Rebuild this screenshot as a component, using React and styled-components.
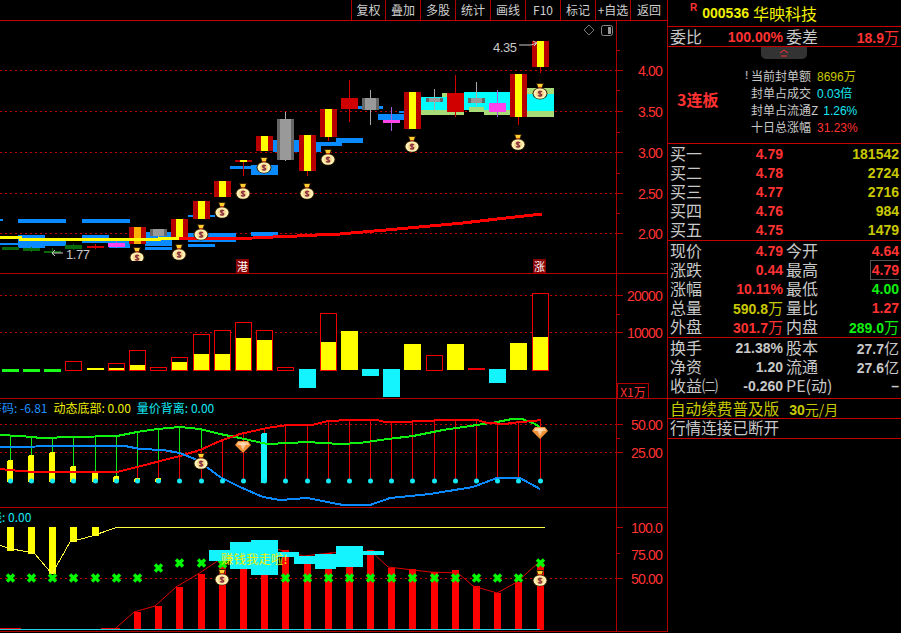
import styled, { createGlobalStyle } from "styled-components"

const GlobalStyle = createGlobalStyle`
  html, body { margin: 0; padding: 0; background: #000; }
  * { box-sizing: border-box; }
`

const CJK = `"Noto Sans CJK SC", sans-serif`
const DIGITS = `"Liberation Sans", "Noto Sans CJK SC", sans-serif`
const AXIS = `"Liberation Sans", "Noto Sans CJK SC", sans-serif`
const LINE = "#b00000"
const RED = "#ff3232"
const YELLOW = "#c8c800"
const GREEN = "#12e812"

// left edge of every day's bar, shared by the four panes
const LEFT = [2, 23, 44, 65, 87, 108, 129, 150, 171, 193, 214, 235, 256, 277, 299, 320, 341, 362, 383, 404, 426, 447, 468, 489, 510, 532]
const MID = LEFT.map((x) => x + 8.5)

const BLUE_BLOCKS = [
  [0, 219, 3, 2], [18, 219, 48, 4], [82, 219, 48, 4], [0, 243, 18, 2], [18, 235, 27, 13], [45, 240, 21, 6],
  [82, 235, 27, 8], [109, 240, 21, 8], [145, 232, 27, 14], [145, 247, 27, 3], [188, 215, 27, 2], [188, 233, 48, 9],
  [188, 244, 27, 3], [251, 232, 27, 4], [230, 166, 27, 3], [251, 165, 27, 10], [273, 140, 5, 12], [294, 140, 5, 12],
  [316, 142, 5, 10], [321, 142, 21, 4], [336, 138, 27, 5], [358, 106, 4, 3], [379, 106, 4, 3], [378, 114, 27, 6], [399, 111, 5, 2],
]

const LIME_BLOCKS = [[442, 93, 5, 4], [421, 110, 43, 5], [469, 107, 15, 5], [484, 110, 26, 5], [527, 88, 27, 6], [527, 111, 27, 6]]
const CYAN_BLOCKS = [[421, 97, 26, 13], [464, 92, 46, 15], [464, 107, 5, 3], [484, 107, 26, 3], [527, 94, 27, 17]]

// [index, kind, top, bottom, wickTop, wickBottom]
const CANDLES = [
  [0, "dark", 247, 250], [1, "dark", 248, 251, 247, 252], [2, "dark", 251, 253, 248, 255], [3, "dark", 245, 249, 244, 250],
  [4, "flat", 246, 248, 244, 249], [5, "pink", 243, 247, 241, 248], [6, "orange", 227, 244], [7, "grey", 229, 236, 229, 238],
  [8, "up", 219, 238], [9, "up", 201, 219], [10, "up", 181, 197], [11, "up", 160, 162, 160, 176], [12, "up", 136, 151],
  [13, "grey", 119, 160, 112, 161], [14, "up", 135, 171, 135, 176], [15, "up", 109, 137, 109, 141], [16, "flat", 98, 109, 80, 122],
  [17, "grey", 98, 110, 90, 125], [18, "pink", 120, 123, 107, 131], [19, "up", 92, 129], [20, "grey", 98, 102, 89, 111],
  [21, "flat", 93, 112, 75, 117], [22, "grey", 98, 103, 82, 106], [23, "pink", 103, 112, 90, 117], [24, "up", 74, 117, 74, 125],
  [25, "up", 41, 67, 41, 73],
]

const MAIN_BAGS = [[137, 255], [179, 252], [201, 232], [222, 210], [243, 191], [264, 165], [307, 191], [328, 157], [412, 144], [518, 142], [540, 91]]

const MA_RED = "179,239 253,238 273,237 297,236 317,235 340,234 363,232 397,229 430,226 463,223 497,219 542,214"

// [index, top, fillTop] hollow bar with yellow part, [index, top] solid ones below
const HOLLOW = [[3, 361], [5, 363, 368], [6, 350, 365], [7, 367], [8, 357, 362], [9, 334, 354], [10, 330, 354], [11, 322, 338], [12, 330, 340], [13, 367], [15, 313, 342], [20, 355], [25, 293, 337]]
const SOLID = [[4, 368], [16, 331], [19, 344], [21, 344], [24, 343]]
const CYAN_VOL = [[14, 388], [17, 376], [18, 397], [23, 383]]

const IND_GREEN = "0,435 20,436 42,438 73,437 117,436 137,432 157,429 180,427 200,429 220,434 240,438 267,444 290,443 307,442 340,444 360,443 380,440 413,436 443,430 477,425 497,422 512,419 522,419 533,423 540,427"
const IND_RED = "0,469 20,471 35,472 117,472 137,467 180,456 200,450 220,441 240,434 267,428 287,425 312,425 328,421 350,420 377,420 385,422 412,422 413,421 433,421 435,420 477,420 487,423 507,424 510,423 533,421 541,420"
const IND_BLUE = "0,447 73,446 125,446 140,449 163,450 180,453 197,460 220,477 240,487 263,497 280,500 307,498 343,505 370,505 390,498 430,494 473,487 497,478 520,478 540,489"
const RED_AT = [469, 471, 472, 472, 472, 472, 467, 462, 456, 450, 441, 434, 428, 425, 425, 421, 420, 420, 422, 421, 420, 420, 420, 424, 422, 420]
const GREEN_AT = [435, 436, 438, 437, 436, 436, 432, 429, 427, 429]
const IND_YELLOW = [460, 455, 452, 466, 472, 476, 478, 478]

const TOP_BARS = [[7, 551], [28, 554], [49, 574], [70, 542], [92, 536]]
const TOP_LINE = "0,545 7,548 28,552 35,554 52,574 70,542 92,536 115,528 545,527"
const RED_BARS = [[6, 612], [7, 606], [8, 587], [9, 574], [10, 560], [11, 545], [12, 545], [13, 550], [14, 556], [15, 553], [16, 550], [17, 550], [18, 568], [19, 569], [20, 572], [21, 570], [22, 586], [23, 593], [24, 582], [25, 563]]
const RED_TRACE = "116,628 134,612 155,606 176,587 198,574 219,560 233,547 250,542 280,550 304,556 330,553 346,552 373,553 388,567 430,572 458,573 473,586 497,593 517,582 538,563"
const LOW_CROSS = [0, 1, 2, 3, 4, 5, 6, 13, 14, 15, 16, 17, 18, 19, 20, 21, 22, 23, 24]
const HIGH_CROSS = [[7, 568], [8, 563], [9, 563], [10, 564], [25, 563]]
const CLOUD = [[209, 550, 21, 11], [230, 542, 21, 27], [251, 540, 27, 35], [278, 552, 21, 5], [294, 556, 21, 8], [315, 554, 21, 15], [336, 546, 27, 21], [363, 551, 21, 4]]

const TOOLS = ["复权", "叠加", "多股", "统计", "画线", "F10", "标记", "+自选", "返回"]

const Screen = styled.div`
  display: flex;
  width: 901px;
  height: 633px;
  overflow: hidden;
  background: #000;
`
const ChartColumn = styled.div`
  display: flex;
  flex-direction: column;
  width: 668px;
  flex: none;
`
const Toolbar = styled.div`
  display: flex;
  height: 21px;
  padding-left: 351px;
  border-bottom: 1px solid #c80000;
`
const ToolButton = styled.div`
  width: 35px;
  border-left: 1px solid ${LINE};
  color: #cfcfcf;
  font: 12px/19px ${CJK};
  text-align: center;
  white-space: nowrap;
  &:first-child { width: 34px; }
  &:last-child { flex: 1; border-right: 1px solid ${LINE}; }
`
const Pane = styled.div`
  position: relative;
  display: flex;
  height: ${(p) => p.$height}px;
  border-bottom: 1px solid ${LINE};
`
const Plot = styled.svg`
  display: block;
  width: 616px;
  height: 100%;
  flex: none;
  shape-rendering: crispEdges;
`
const Axis = styled.svg`
  display: block;
  width: 52px;
  height: 100%;
  flex: none;
  border-left: 1px solid ${LINE};
  border-right: 1px solid ${LINE};
  shape-rendering: crispEdges;
`
const AxisLabel = styled.text`
  fill: ${RED};
  font: 14px ${AXIS};
  letter-spacing: -0.8px;
  text-anchor: end;
  dominant-baseline: central;
`
const ChartNote = styled.text`
  fill: #c8c8c8;
  font: 13px ${AXIS};
  letter-spacing: -0.4px;
  dominant-baseline: central;
`
const BoardMark = styled.div`
  position: absolute;
  top: ${(p) => p.$top}px;
  left: ${(p) => p.$left}px;
  width: 13px;
  height: 14px;
  background: #860000;
  color: #fff;
  font: 11px/14px ${CJK};
  text-align: center;
`
const Legend = styled.div`
  position: absolute;
  top: 1px;
  left: ${(p) => p.$left}px;
  display: flex;
  gap: 6px;
  font: 12px/16px ${CJK};
  white-space: nowrap;
`
const LegendItem = styled.span`
  color: ${(p) => p.$color};
`
const UnitBox = styled.div`
  position: absolute;
  left: 617px;
  bottom: 0;
  width: 32px;
  height: 15px;
  border: 1px solid ${LINE};
  border-bottom: 0;
  color: ${RED};
  font: 12px/15px ${CJK};
  text-align: center;
`
const SellSignal = styled.div`
  position: absolute;
  top: 42px;
  left: 221px;
  color: #f0f000;
  font: 12.5px/18px ${CJK};
  white-space: nowrap;
`

const QuotePanel = styled.div`
  display: flex;
  flex-direction: column;
  width: 233px;
  flex: none;
`
const Section = styled.div`
  border-bottom: 1px solid #c80000;
  height: ${(p) => p.$height}px;
`
const TitleRow = styled(Section)`
  display: flex;
  align-items: center;
  padding-left: 22px;
  color: #f0f000;
`
const Rights = styled.span`
  align-self: flex-start;
  margin: 3px 5px 0 0;
  color: ${RED};
  font: bold 10px/10px ${AXIS};
`
const Code = styled.span`
  font: bold 14px ${DIGITS};
  margin-right: 4px;
`
const Name = styled.span`
  font: 16px ${CJK};
`
const QuoteGrid = styled.div`
  display: grid;
  grid-template-columns: 113px 113px;
  column-gap: 3px;
  padding-left: 2px;
`
const Cell = styled.div`
  display: flex;
  justify-content: ${(p) => (p.$end ? "flex-end" : "space-between")};
  align-items: center;
  height: ${(p) => p.$row}px;
  white-space: nowrap;
`
const Label = styled.span`
  margin-top: -2px;
  color: #c8c8c8;
  font: 16px/1 ${CJK};
`
const Value = styled.span`
  color: ${(p) => p.$color || RED};
  font: bold 14px/1 ${DIGITS};
`
const Unit = styled.span`
  font: 15px/1 ${CJK};
`
const BoxedValue = styled(Value)`
  padding: 2px 0 2px 1px;
  border: 1px solid #555;
  border-right: 0;
`
const BuyRows = styled.div`
  display: grid;
  grid-template-columns: 113px 116px;
  padding-left: 2px;
`
const Board = styled(Section)`
  position: relative;
  display: flex;
  align-items: center;
`
const Collapse = styled.svg`
  position: absolute;
  top: 0;
  left: 93px;
  width: 46px;
  height: 12px;
  background: #333;
  border-radius: 0 0 5px 5px;
`
const BoardTag = styled.div`
  width: 83px;
  margin-top: 8px;
  padding-left: 9px;
  color: ${RED};
  font: bold 16px ${CJK};
`
const BoardList = styled.div`
  display: flex;
  flex-direction: column;
  margin-top: 12px;
  position: relative;
`
const BoardLine = styled.div`
  height: 17px;
  color: #c8c8c8;
  font: 12px/17px ${CJK};
  white-space: nowrap;
`
const BoardValue = styled.span`
  margin-left: ${(p) => p.$gap || 6}px;
  color: ${(p) => p.$color};
  font-family: ${AXIS};
`
const Alert = styled.span`
  position: absolute;
  left: -6px;
  top: 0;
  color: #aaa;
  font: bold 10px/17px ${AXIS};
`
const Notice = styled(Section)`
  padding-left: 2px;
  color: ${(p) => p.$color};
  font: 15.6px/${(p) => p.$height - 3}px ${CJK};
  white-space: nowrap;
`
const Price = styled.span`
  margin-left: 10px;
  font: bold 14px ${DIGITS};
`
const PriceUnit = styled.span`
  font: 14px ${CJK};
`

function MoneyBag({ x, y }) {
  return (
    <g transform={`translate(${x - 8} ${y - 9})`} shapeRendering="auto">
      <path d="M4 1h8l-1.5 4.5H5.500z" fill="#3a2400" />
      <ellipse cx="8" cy="11.500" rx="7.500" ry="6" fill="#3a2400" />
      <ellipse cx="8" cy="11.500" rx="6.500" ry="5.200" fill="#fff2b8" />
      <path d="M5.200 2h5.600l-1 3H6.200z" fill="#ffd030" />
      <rect x="6.200" y="5" width="3.600" height="1.200" fill="#c04010" />
      <circle cx="8" cy="11.500" r="3.800" fill="#f6d488" />
      <path d="M10 9.800c-1-.7-3.600-.7-3.600.8s3.400 1 3.400 2.400-2.600 1.400-3.800.6M8 8.500v6" fill="none" stroke="#8a3040" strokeWidth="1.200" />
    </g>
  )
}

function Gem({ x, y }) {
  return (
    <g transform={`translate(${x - 8} ${y - 6})`} shapeRendering="auto">
      <path d="M3 0h10l3 4-8 8-8-8z" fill="#f09038" />
      <path d="M3 1h10l1 3H2z" fill="#ffc890" />
      <path d="M5 3c2-2 4-2 6 0l-3 6z" fill="#ffe4c8" opacity="0.7" />
    </g>
  )
}

function Cross({ x, y }) {
  return <path d={`M${x - 3.5} ${y - 3.5}L${x + 3.5} ${y + 3.5}M${x + 3.5} ${y - 3.5}L${x - 3.5} ${y + 3.5}`} stroke="#00f800" strokeWidth="3.500" shapeRendering="auto" />
}

function Dotted({ y, width = 616 }) {
  return <line x1="0" x2={width} y1={y} y2={y} stroke="#c00000" strokeDasharray="2 3" />
}

function Block({ rect, fill }) {
  return <rect x={rect[0]} y={rect[1]} width={rect[2]} height={rect[3]} fill={fill} />
}

function Candle({ data }) {
  const [i, kind, top, bottom, wickTop, wickBottom] = data
  const x = LEFT[i]
  const wickColor = { grey: "#aaa", pink: "#a060e0", dark: "#0a6a0a" }[kind] || "#d00000"
  return (
    <g>
      {wickTop !== undefined && <rect x={MID[i] - 0.5} y={wickTop} width="1" height={wickBottom - wickTop} fill={wickColor} />}
      {kind === "dark" && <rect x={x} y={top} width="17" height={bottom - top} fill="#0a6a0a" />}
      {kind === "flat" && <rect x={x} y={top} width="17" height={bottom - top} fill="#d00000" />}
      {kind === "pink" && <rect x={x} y={top} width="17" height={bottom - top} fill="#ff44ee" />}
      {(kind === "up" || kind === "orange") && (
        <>
          <rect x={x} y={top} width="17" height={bottom - top} fill="#b80000" />
          <rect x={x + 5} y={top} width="7" height={bottom - top} fill={kind === "up" ? "#ffff00" : "#ffb000"} />
        </>
      )}
      {kind === "grey" && (
        <>
          <rect x={x} y={top} width="17" height={bottom - top} fill="#666" />
          <rect x={x + 3} y={top} width="11" height={bottom - top} fill="#999" />
        </>
      )}
    </g>
  )
}

function MainPane() {
  return (
    <Pane $height={253}>
      <Plot viewBox="0 21 616 252">
        {[70, 111, 152, 193, 233].map((y) => <Dotted key={y} y={y} />)}
        {BLUE_BLOCKS.map((r, i) => <Block key={i} rect={r} fill="#0a8aff" />)}
        {LIME_BLOCKS.map((r, i) => <Block key={i} rect={r} fill="#a8dc78" />)}
        {CYAN_BLOCKS.map((r, i) => <Block key={i} rect={r} fill="#00ffff" />)}
        {CANDLES.map((c) => <Candle key={c[0]} data={c} />)}
        <polyline points="0,237 20,237 20,239 159,239 159,238 179,238" fill="none" stroke="#ffff00" strokeWidth="3" />
        <polyline points={MA_RED} fill="none" stroke="#ff0000" strokeWidth="3" />
        {MAIN_BAGS.map(([x, y]) => <MoneyBag key={x} x={x} y={y} />)}
        {/* the lowest bag is cut off in the terminal too */}
        <rect x="128" y="261" width="18" height="5" fill="#000" />
        <ChartNote x="493" y="47">4.35</ChartNote>
        <path d="M519 45h12l6-2" stroke="#c8c8c8" fill="none" shapeRendering="auto" />
        <path d="M533 41l4 2-3 3" stroke="#c8c8c8" fill="none" shapeRendering="auto" />
        <ChartNote x="66" y="254" letterSpacing="1">1.77</ChartNote>
        <path d="M53 253h10M55 250l-3 3 3 3" stroke="#c8c8c8" fill="none" shapeRendering="auto" />
        <path d="M589 25l5 5-5 5-5-5z" stroke="#777" fill="none" shapeRendering="auto" />
        <rect x="601.500" y="25.500" width="11" height="10" rx="2" stroke="#888" fill="none" shapeRendering="auto" />
        <rect x="608" y="27" width="3" height="7" fill="#999" />
      </Plot>
      <Axis viewBox="617 21 50 252">
        {[70, 111, 152, 193, 233].map((y, i) => (
          <g key={y}>
            <rect x="617" y={y} width="6" height="1" fill={LINE} />
            <AxisLabel x="662" y={y + 1}>{(4 - i * 0.5).toFixed(2)}</AxisLabel>
          </g>
        ))}
        {[50, 90, 132, 173, 213].map((y) => <rect key={y} x="617" y={y} width="3" height="1" fill={LINE} />)}
      </Axis>
      <BoardMark $top={238} $left={236}>港</BoardMark>
      <BoardMark $top={238} $left={533}>涨</BoardMark>
    </Pane>
  )
}

function VolumePane() {
  return (
    <Pane $height={125}>
      <Plot viewBox="0 274 616 124">
        <Dotted y={295} />
        <Dotted y={332} />
        {[0, 1, 2].map((i) => <rect key={i} x={LEFT[i]} y="369" width="17" height="3" fill="#1aff1a" />)}
        {HOLLOW.map(([i, top, fill]) => (
          <g key={i}>
            <rect x={LEFT[i]} y={top} width="17" height={370 - top} fill="#000" />
            {fill && <rect x={LEFT[i]} y={fill} width="17" height={370 - fill} fill="#ffff00" />}
            <rect x={LEFT[i] + 0.5} y={top + 0.5} width="16" height={369.5 - top} fill="none" stroke="#f00000" />
          </g>
        ))}
        {SOLID.map(([i, top]) => <rect key={i} x={LEFT[i]} y={top} width="17" height={370 - top} fill="#ffff00" />)}
        {CYAN_VOL.map(([i, bottom]) => <rect key={i} x={LEFT[i]} y="369" width="17" height={bottom - 369} fill="#14f4ff" />)}
        <rect x={LEFT[22]} y="368" width="17" height="2" fill="#f00000" />
      </Plot>
      <Axis viewBox="617 274 50 124">
        {[295, 332].map((y) => (
          <g key={y}>
            <rect x="617" y={y} width="6" height="1" fill={LINE} />
            <AxisLabel x="662" y={y + 1}>{y === 295 ? "20000" : "10000"}</AxisLabel>
          </g>
        ))}
        <rect x="617" y="314" width="3" height="1" fill={LINE} />
      </Axis>
      <UnitBox>X1万</UnitBox>
    </Pane>
  )
}

function TrendPane() {
  return (
    <Pane $height={109}>
      <Plot viewBox="0 399 616 108">
        <Dotted y={424} />
        <Dotted y={452} />
        {GREEN_AT.map((y, i) => (
          <rect key={i} x={MID[i] - 0.5} y={y} width="1" height={(i < 6 ? IND_YELLOW[i] : RED_AT[i]) - y} fill={GREEN} />
        ))}
        {RED_AT.map((y, i) => (i > 5 ? <rect key={i} x={MID[i] - 0.5} y={y} width="1" height={481 - y} fill="#e80000" /> : null))}
        {IND_YELLOW.map((y, i) => <rect key={i} x={LEFT[i] + 5} y={y} width="6" height={482 - y} rx="2" fill="#ffff00" />)}
        <rect x={LEFT[12] + 5} y="433" width="6" height="50" rx="2" fill="#14f4ff" />
        <polyline points={IND_GREEN} fill="none" stroke="#10f010" strokeWidth="2" />
        <polyline points={IND_RED} fill="none" stroke="#ff0000" strokeWidth="2" />
        <polyline points={IND_BLUE} fill="none" stroke="#0a8aff" strokeWidth="2" />
        {MID.map((x) => <circle key={x} cx={x} cy="481" r="2.500" fill="#14e8f4" shapeRendering="auto" />)}
        <MoneyBag x={201} y={461} />
        <Gem x={243} y={447} />
        <Gem x={540} y={433} />
      </Plot>
      <Axis viewBox="617 399 50 108">
        {[424, 452].map((y) => (
          <g key={y}>
            <rect x="617" y={y} width="6" height="1" fill={LINE} />
            <AxisLabel x="662" y={y + 1}>{y === 424 ? "50.00" : "25.00"}</AxisLabel>
          </g>
        ))}
        <rect x="617" y="438" width="3" height="1" fill={LINE} />
      </Axis>
      <Legend $left={-10}>
        <LegendItem $color="#1e90ff">筹码: -6.81</LegendItem>
        <LegendItem $color="#f0f000">动态底部: 0.00</LegendItem>
        <LegendItem $color="#14e8f4">量价背离: 0.00</LegendItem>
      </Legend>
    </Pane>
  )
}

function SignalPane() {
  return (
    <Pane $height={124}>
      <Plot viewBox="0 508 616 123">
        <Dotted y={578} />
        <rect x="0" y="628" width="21" height="1" fill="#f00000" />
        <rect x="101" y="628" width="19" height="1" fill="#f00000" />
        {RED_BARS.map(([i, top]) => <rect key={i} x={LEFT[i] + 5} y={top} width="7" height={630 - top} fill="#ff0000" />)}
        <polyline points={RED_TRACE} fill="none" stroke="#e00000" strokeWidth="1" shapeRendering="auto" />
        {TOP_BARS.map(([x, bottom]) => <rect key={x} x={x} y="527" width="7" height={bottom - 527} fill="#ffff00" />)}
        <polyline points={TOP_LINE} fill="none" stroke="#ffff40" strokeWidth="1" />
        {LOW_CROSS.map((i) => <Cross key={i} x={MID[i]} y={578} />)}
        {HIGH_CROSS.map(([i, y]) => <Cross key={i} x={MID[i]} y={y} />)}
        {CLOUD.map((r, i) => <Block key={i} rect={r} fill="#14f4ff" />)}
        <MoneyBag x={222} y={577} />
        <MoneyBag x={540} y={578} />
        <rect x="0" y="629" width="540" height="1" fill="#20d0e0" />
      </Plot>
      <Axis viewBox="617 508 50 123">
        {[[527, "100.0"], [554, "75.00"], [578, "50.00"]].map(([y, text]) => (
          <g key={y}>
            {y !== 554 && <rect x="617" y={y} width="6" height="1" fill={LINE} />}
            {y === 554 && <rect x="617" y={553} width="3" height="1" fill={LINE} />}
            <AxisLabel x="662" y={y + 1}>{text}</AxisLabel>
          </g>
        ))}
      </Axis>
      <Legend $left={-34}>
        <LegendItem $color="#14e8f4">信号线: 0.00</LegendItem>
      </Legend>
      <SellSignal>赚钱我走啦!</SellSignal>
    </Pane>
  )
}

const BUY = [["买一", "4.79", "181542"], ["买二", "4.78", "2724"], ["买三", "4.77", "2716"], ["买四", "4.76", "984"], ["买五", "4.75", "1479"]]

export default function App() {
  return (
    <>
      <GlobalStyle />
      <Screen>
        <ChartColumn>
          <Toolbar>
            {TOOLS.map((t) => <ToolButton key={t}>{t}</ToolButton>)}
          </Toolbar>
          <MainPane />
          <VolumePane />
          <TrendPane />
          <SignalPane />
        </ChartColumn>
        <QuotePanel>
          <TitleRow $height={27}>
            <Rights>R</Rights>
            <Code>000536</Code>
            <Name>华映科技</Name>
          </TitleRow>
          <Section $height={20}>
            <QuoteGrid>
              <Cell $row={19}><Label>委比</Label><Value>100.00%</Value></Cell>
              <Cell $row={19}><Label>委差</Label><Value>18.9<Unit>万</Unit></Value></Cell>
            </QuoteGrid>
          </Section>
          <Board $height={97}>
            <Collapse viewBox="0 0 46 12">
              <path d="M19 6l4-3 4 3M20 9h6" fill="none" stroke={RED} />
            </Collapse>
            <BoardTag>3连板</BoardTag>
            <BoardList>
              <Alert>!</Alert>
              <BoardLine>当前封单额<BoardValue $color={YELLOW}>8696万</BoardValue></BoardLine>
              <BoardLine>封单占成交<BoardValue $color="#14e8f4">0.03倍</BoardValue></BoardLine>
              <BoardLine>封单占流通Z<BoardValue $color="#14e8f4" $gap={5}>1.26%</BoardValue></BoardLine>
              <BoardLine>十日总涨幅<BoardValue $color={RED}>31.23%</BoardValue></BoardLine>
            </BoardList>
          </Board>
          <Section $height={97}>
            <BuyRows>
              {BUY.flatMap(([name, price, vol]) => [
                <Cell key={name} $row={19.2}><Label>{name}</Label><Value>{price}</Value></Cell>,
                <Cell key={name + vol} $row={19.2} $end><Value $color={YELLOW}>{vol}</Value></Cell>,
              ])}
            </BuyRows>
          </Section>
          <Section $height={97}>
            <QuoteGrid>
              <Cell $row={19}><Label>现价</Label><Value>4.79</Value></Cell>
              <Cell $row={19}><Label>今开</Label><Value>4.64</Value></Cell>
              <Cell $row={19}><Label>涨跌</Label><Value>0.44</Value></Cell>
              <Cell $row={19}><Label>最高</Label><BoxedValue>4.79</BoxedValue></Cell>
              <Cell $row={19}><Label>涨幅</Label><Value>10.11%</Value></Cell>
              <Cell $row={19}><Label>最低</Label><Value $color="#10f010">4.00</Value></Cell>
              <Cell $row={19}><Label>总量</Label><Value $color={YELLOW}>590.8<Unit>万</Unit></Value></Cell>
              <Cell $row={19}><Label>量比</Label><Value>1.27</Value></Cell>
              <Cell $row={19}><Label>外盘</Label><Value>301.7<Unit>万</Unit></Value></Cell>
              <Cell $row={19}><Label>内盘</Label><Value $color="#10f010">289.0<Unit>万</Unit></Value></Cell>
            </QuoteGrid>
          </Section>
          <Section $height={61}>
            <QuoteGrid>
              <Cell $row={19}><Label>换手</Label><Value $color="#c8c8c8">21.38%</Value></Cell>
              <Cell $row={19}><Label>股本</Label><Value $color="#c8c8c8">27.7<Unit>亿</Unit></Value></Cell>
              <Cell $row={19}><Label>净资</Label><Value $color="#c8c8c8">1.20</Value></Cell>
              <Cell $row={19}><Label>流通</Label><Value $color="#c8c8c8">27.6<Unit>亿</Unit></Value></Cell>
              <Cell $row={19}><Label>收益㈡</Label><Value $color="#c8c8c8">-0.260</Value></Cell>
              <Cell $row={19}><Label>PE(动)</Label><Value $color="#c8c8c8">–</Value></Cell>
            </QuoteGrid>
          </Section>
          <Notice $height={20} $color={YELLOW}>自动续费普及版<Price>30</Price><PriceUnit>元/月</PriceUnit></Notice>
          <Notice $height={20} $color="#c8c8c8">行情连接已断开</Notice>
        </QuotePanel>
      </Screen>
    </>
  )
}
